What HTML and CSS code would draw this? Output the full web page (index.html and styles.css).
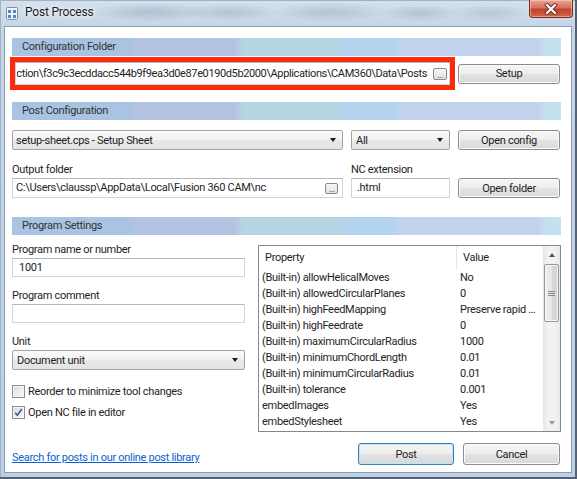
FILE: index.html
```html
<!DOCTYPE html>
<html>
<head>
<meta charset="utf-8">
<title>Post Process</title>
<link rel="stylesheet" href="styles.css">
</head>
<body>
<div class="window">
  <div class="titlebar">
    <svg class="app-icon" width="12" height="13" viewBox="0 0 12 13">
      <rect x="0.5" y="0.5" width="11" height="12" rx="1" fill="#eef3f8" stroke="#7f91a6"/>
      <rect x="2" y="3" width="3" height="3" fill="#4f86c6"/>
      <rect x="7" y="3" width="3" height="3" fill="#4f86c6"/>
      <rect x="2" y="8" width="3" height="3" fill="#4f86c6"/>
      <rect x="7" y="8" width="3" height="3" fill="#4f86c6"/>
    </svg>
    <span class="title">Post Process</span>
    <div class="close">
      <svg width="14" height="12" viewBox="0 0 14 12">
        <path d="M3 2 L11 10 M11 2 L3 10" stroke="#6b2a20" stroke-width="4" stroke-linecap="square"/>
        <path d="M3 2 L11 10 M11 2 L3 10" stroke="#ffffff" stroke-width="2.2" stroke-linecap="square"/>
      </svg>
    </div>
  </div>

  <div class="client">
    <div class="section-head">Configuration Folder</div>
    <div class="row row-config">
      <div class="highlight">
        <div class="textbox path-box">
          <div class="path-clip"><span>Production\f3c9c3ecddacc544b9f9ea3d0e87e0190d5b2000\Applications\CAM360\Data\Posts</span></div>
          <span class="browse">...</span>
        </div>
      </div>
      <button class="btn btn-setup">Setup</button>
    </div>

    <div class="section-head head-post">Post Configuration</div>
    <div class="grid3 row-combo">
      <div class="combo"><span>setup-sheet.cps - Setup Sheet</span><i class="arrow"></i></div>
      <div class="combo combo-all"><span>All</span><i class="arrow"></i></div>
      <button class="btn">Open config</button>
    </div>
    <div class="grid3 row-labels">
      <div class="label">Output folder</div>
      <div class="label">NC extension</div>
      <div></div>
    </div>
    <div class="grid3 row-output">
      <div class="textbox out-box"><span class="grow">C:\Users\claussp\AppData\Local\Fusion 360 CAM\nc</span><span class="browse">...</span></div>
      <div class="textbox ext-box">.html</div>
      <button class="btn">Open folder</button>
    </div>

    <div class="section-head head-prog">Program Settings</div>
    <div class="body">
      <div class="left-col">
        <div class="label">Program name or number</div>
        <div class="textbox field num-box">1001</div>
        <div class="label label-gap">Program comment</div>
        <div class="textbox field"></div>
        <div class="label label-gap">Unit</div>
        <div class="combo unit-combo"><span>Document unit</span><i class="arrow"></i></div>
        <div class="check check-first"><span class="box"></span>Reorder to minimize tool changes</div>
        <div class="check check-second"><span class="box checked"><svg width="11" height="11" viewBox="0 0 11 11"><path d="M2.2 5.8 L4.4 8.3 L8.8 2" fill="none" stroke="#3e5a94" stroke-width="1.6"/></svg></span>Open NC file in editor</div>
      </div>
      <div class="props">
        <div class="props-main">
          <div class="props-head">
            <div class="ph-prop">Property</div>
            <div class="ph-val">Value</div>
          </div>
          <div class="prow"><span>(Built-in) allowHelicalMoves</span><span>No</span></div>
          <div class="prow"><span>(Built-in) allowedCircularPlanes</span><span>0</span></div>
          <div class="prow"><span>(Built-in) highFeedMapping</span><span>Preserve rapid movement</span></div>
          <div class="prow"><span>(Built-in) highFeedrate</span><span>0</span></div>
          <div class="prow"><span>(Built-in) maximumCircularRadius</span><span>1000</span></div>
          <div class="prow"><span>(Built-in) minimumChordLength</span><span>0.01</span></div>
          <div class="prow"><span>(Built-in) minimumCircularRadius</span><span>0.01</span></div>
          <div class="prow"><span>(Built-in) tolerance</span><span>0.001</span></div>
          <div class="prow"><span>embedImages</span><span>Yes</span></div>
          <div class="prow"><span>embedStylesheet</span><span>Yes</span></div>
        </div>
        <div class="scrollbar">
          <div class="sb-arrow"><i class="tri-up"></i></div>
          <div class="sb-thumb"><i class="grip"></i></div>
          <div class="sb-track"></div>
          <div class="sb-arrow"><i class="tri-down"></i></div>
        </div>
      </div>
    </div>

    <div class="bottom-row">
      <a class="link" href="#">Search for posts in our online post library</a>
      <div class="buttons">
        <button class="btn btn-big btn-default">Post</button>
        <button class="btn btn-big">Cancel</button>
      </div>
    </div>
  </div>
</div>
</body>
</html>
```

FILE: styles.css
```css
* { box-sizing: border-box; }
html, body { margin: 0; padding: 0; }
body {
  width: 577px;
  height: 479px;
  overflow: hidden;
  font-family: Roboto, "Liberation Sans", sans-serif;
  font-size: 11px;
  letter-spacing: -0.3px;
  color: #1e1e1e;
  background: #bfd0e3;
}
.window {
  width: 577px;
  height: 479px;
  display: flex;
  flex-direction: column;
  background:
    radial-gradient(ellipse 60px 10px at 150px 12px, rgba(120,140,165,0.35), rgba(120,140,165,0) 100%),
    radial-gradient(ellipse 50px 9px at 230px 12px, rgba(120,140,165,0.3), rgba(120,140,165,0) 100%),
    radial-gradient(ellipse 60px 10px at 330px 12px, rgba(120,140,165,0.3), rgba(120,140,165,0) 100%),
    radial-gradient(ellipse 40px 9px at 420px 13px, rgba(120,140,165,0.3), rgba(120,140,165,0) 100%),
    radial-gradient(ellipse 40px 9px at 490px 13px, rgba(120,140,165,0.25), rgba(120,140,165,0) 100%),
    linear-gradient(to bottom, #d5e1ec 0, #c6d6e7 26px, #bdd0e4 100%);
  box-shadow: inset -2px -2px 0 #566273, inset 0 0 0 1px #9fb2c6;
}
.titlebar {
  height: 26px;
  flex: none;
  display: flex;
  align-items: flex-start;
  padding-left: 6px;
}
.app-icon { margin-top: 7px; flex: none; }
.title {
  margin-left: 7px;
  margin-top: 5px;
  font-size: 12px;
  line-height: 15px;
  letter-spacing: -0.2px;
  color: #1b1b1b;
  text-shadow: 0 0 6px #ffffff, 0 0 3px #ffffff;
}
.close {
  margin-left: auto;
  margin-right: 4px;
  width: 44px;
  height: 18px;
  border: 1px solid #7a2e22;
  border-top: none;
  border-radius: 0 0 4px 4px;
  background: linear-gradient(to bottom, #e9a495 0, #d6715c 45%, #c2432b 55%, #d0634a 100%);
  box-shadow: inset 0 0 0 1px rgba(255,220,210,0.5);
  display: flex;
  align-items: center;
  justify-content: center;
}

.client {
  margin: 0 5px 0 4px;
  height: 447px;
  flex: none;
  background: #ffffff;
  border: 1px solid #8b9db2;
  padding: 11px 10px 0 7px;
  display: flex;
  flex-direction: column;
}

.section-head {
  height: 18px;
  line-height: 18px;
  padding-left: 10px;
  color: #333;
  flex: none;
  background: linear-gradient(to right,
    #a9c4e2 0, #a9c4e2 117px, #b5c3e2 125px, #b5c3e2 223px,
    #b6d5e3 231px, #b6d5e3 326px, #b4d3ee 334px, #b4d3ee 381px,
    #c3d3ee 389px, #c3d3ee 526px, #c4e1ef 534px, #c4e1ef 100%);
}
.head-post { margin-top: 12px; }
.head-prog { margin-top: 19px; }

.row { display: flex; align-items: center; }
.row-config { margin-top: 1px; }
.highlight {
  margin-left: -2px;
  width: 445px;
  height: 33px;
  border: 5px solid #ff2a0c;
}
.textbox {
  border: 1px solid #cfd4db;
  border-top-color: #b3b8c0;
  background: #fff;
  height: 20px;
  line-height: 18px;
  white-space: nowrap;
  overflow: hidden;
}
.path-box {
  height: 23px;
  line-height: 21px;
  display: flex;
  align-items: center;
  padding: 0 2px 0 1px;
}
.path-clip {
  flex: 1;
  min-width: 0;
  overflow: hidden;
  display: flex;
  justify-content: flex-end;
  padding-right: 6px;
  letter-spacing: -0.38px;
}
.path-clip span { flex: none; }
.browse {
  flex: none;
  width: 14px;
  height: 12px;
  border: 1px solid #8a8a8a;
  border-radius: 2px;
  background: linear-gradient(#f6f6f6, #e1e1e1);
  font-size: 9px;
  line-height: 12px;
  text-align: center;
  color: #333;
  letter-spacing: -0.5px;
}
.btn {
  font: inherit;
  letter-spacing: inherit;
  color: #1e1e1e;
  padding: 0;
  height: 20px;
  border: 1px solid #8c8c8c;
  border-radius: 3px;
  background: linear-gradient(to bottom, #f5f5f5 0, #eeeeee 50%, #e3e3e3 51%, #d9d9d9 100%);
  box-shadow: inset 0 0 0 1px #fbfbfb;
  text-align: center;
}
.btn-setup { width: 102px; margin-left: 3px; }

.grid3 {
  display: grid;
  grid-template-columns: 331px 99px 102px;
  column-gap: 8px;
}
.row-combo { margin-top: 10px; height: 20px; }
.combo {
  height: 20px;
  border: 1px solid #a3a3a3;
  border-radius: 2px;
  background: linear-gradient(to bottom, #fbfbfb 0, #f1f1f1 50%, #e8e8e8 51%, #e4e4e4 100%);
  display: flex;
  align-items: center;
  padding: 0 6px 0 3px;
  white-space: nowrap;
}
.combo span { flex: 1; }
.arrow {
  width: 0; height: 0;
  border-left: 3.5px solid transparent;
  border-right: 3.5px solid transparent;
  border-top: 4px solid #1a1a1a;
}
.combo-all { padding-left: 4px; }
.row-labels { margin-top: 13px; }
.label { height: 14px; line-height: 14px; color: #1e1e1e; }
.row-output { margin-top: 1px; height: 20px; }
.out-box { display: flex; align-items: center; padding: 0 4px 0 3px; }
.out-box .grow { flex: 1; }
.out-box .browse { width: 13px; height: 11px; line-height: 10px; }
.ext-box { padding-left: 5px; }

.body {
  display: flex;
  margin-top: 8px;
  height: 189px;
  flex: none;
}
.left-col { width: 233px; display: flex; flex-direction: column; }
.field { height: 19px; line-height: 17px; margin-top: 1px; }
.num-box { padding-left: 6px; }
.label-gap { margin-top: 12px; }
.unit-combo { margin-top: 1px; padding-left: 4px; }
.check {
  height: 16px;
  display: flex;
  align-items: center;
}
.check-first { margin-top: 13px; }
.check-second { margin-top: 5px; }
.box {
  width: 13px; height: 13px;
  border: 1px solid #8e8f8f;
  background: linear-gradient(135deg, #d6d8db 0, #f2f2f2 70%, #fafafa 100%);
  box-shadow: inset 0 0 0 1px #f5f5f5;
  margin-right: 3px;
  flex: none;
  display: flex;
  align-items: center;
  justify-content: center;
}

.props {
  margin-left: 13px;
  margin-top: 2px;
  width: 303px;
  height: 187px;
  border: 1px solid #828790;
  display: flex;
}
.props-main { flex: 1; min-width: 0; }
.props-head {
  height: 24px;
  display: grid;
  grid-template-columns: 198px 1fr;
  line-height: 24px;
}
.ph-prop { padding-left: 6px; border-right: 1px solid #e5e5e5; }
.ph-val { padding-left: 6px; }
.prow {
  height: 16px;
  line-height: 16px;
  display: grid;
  grid-template-columns: 198px 1fr;
  white-space: nowrap;
}
.prow span { overflow: hidden; text-overflow: ellipsis; }
.prow span:first-child { padding-left: 3px; }
.prow span:last-child { padding-left: 3px; padding-right: 4px; }

.scrollbar {
  width: 17px;
  flex: none;
  display: flex;
  flex-direction: column;
  background: linear-gradient(to right, #e6e6e6, #f2f2f2 30%, #f2f2f2 70%, #e9e9e9);
}
.sb-arrow {
  height: 17px;
  display: flex;
  align-items: center;
  justify-content: center;
  flex: none;
}
.tri-up, .tri-down {
  width: 0; height: 0;
  border-left: 3.5px solid transparent;
  border-right: 3.5px solid transparent;
}
.tri-up { border-bottom: 4px solid #555; }
.tri-down { border-top: 4px solid #9a9a9a; }
.sb-thumb {
  margin: 1px 1px 0 1px;
  height: 58px;
  flex: none;
  border: 1px solid #979797;
  border-radius: 2px;
  background: linear-gradient(to right, #f1f1f1, #e5e5e5 50%, #d8d8d8 51%, #d3d3d3);
  box-shadow: inset 0 0 0 1px #f7f7f7;
  display: flex;
  align-items: center;
  justify-content: center;
}
.grip {
  width: 7px;
  height: 5px;
  border-top: 1px solid #8a8a8a;
  border-bottom: 1px solid #8a8a8a;
  background: linear-gradient(#8a8a8a, #8a8a8a) center / 7px 1px no-repeat;
}
.sb-track { flex: 1; }

.bottom-row {
  margin-top: 11px;
  display: flex;
  align-items: flex-end;
  height: 22px;
}
.link {
  color: #0b5fd0;
  text-decoration: underline;
  line-height: 14px;
}
.buttons {
  margin-left: auto;
  margin-right: 1px;
  display: flex;
  gap: 9px;
}
.btn-big { height: 22px; width: 97px; }
.btn-default {
  width: 96px;
  border-color: #3c7fb1;
  box-shadow: inset 0 0 0 1px #bfe3f7;
}
```
